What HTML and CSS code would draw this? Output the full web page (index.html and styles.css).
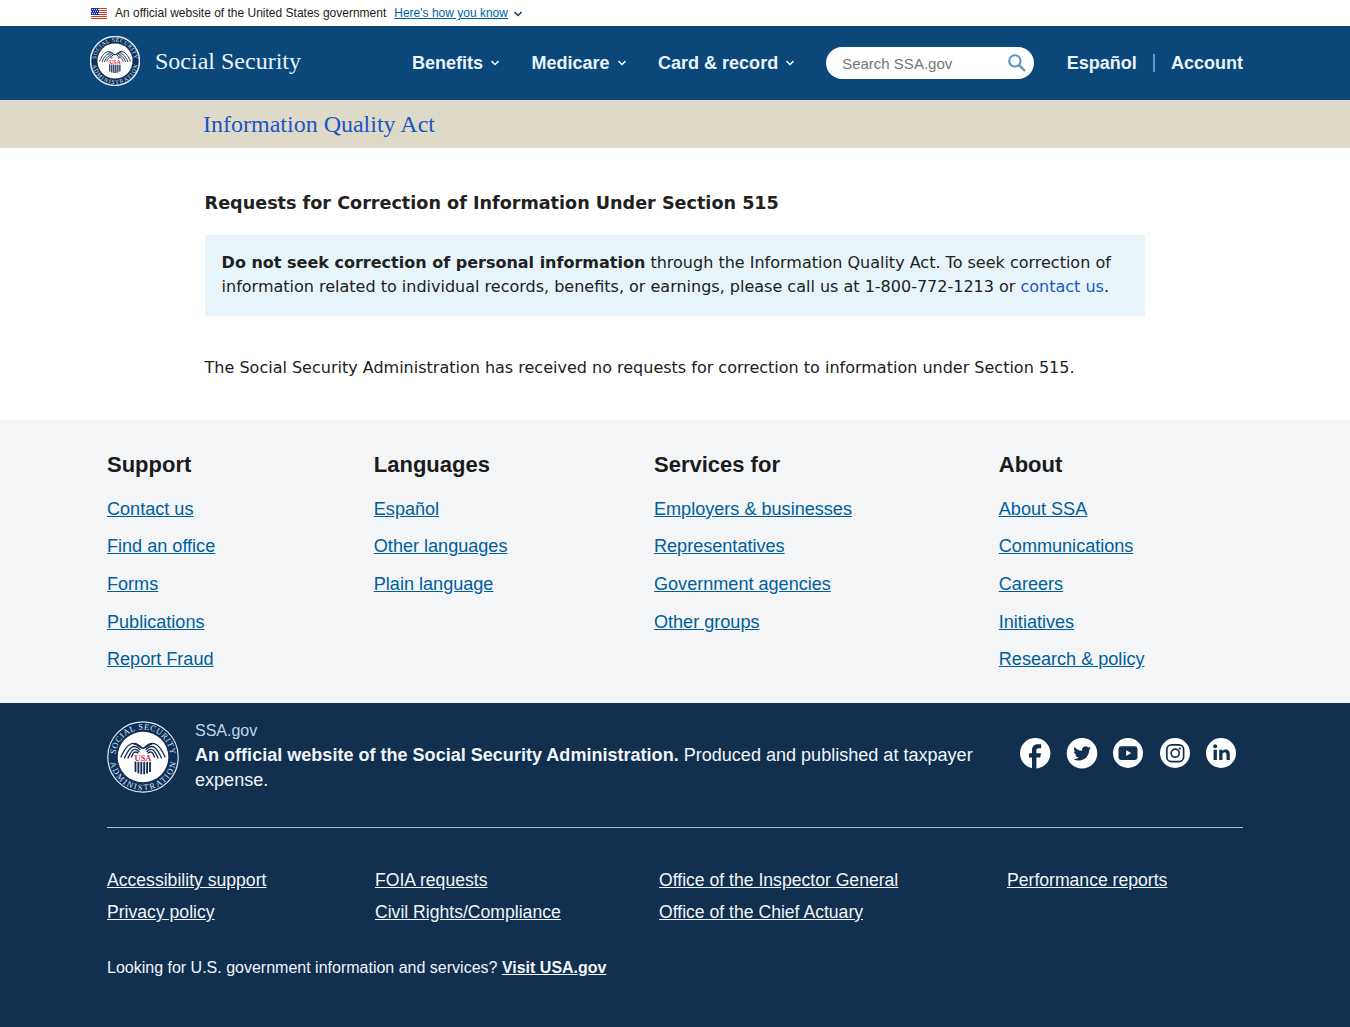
FILE: index.html
```html
<!DOCTYPE html>
<html lang="en">
<head>
<meta charset="utf-8">
<title>Information Quality Act | SSA</title>
<link rel="stylesheet" href="styles.css">
</head>
<body>
<svg class="defs" width="0" height="0" aria-hidden="true">
  <symbol id="seal" viewBox="0 0 72 72">
    <circle class="seal-disc" cx="36" cy="36" r="35.2"/>
    <circle cx="36" cy="36" r="25.3" fill="#fff"/>
    <path id="arc-top" d="M8.5 36A27.5 27.5 0 0 1 63.5 36" fill="none"/>
    <path id="arc-bottom" d="M2.7 36A33.3 33.3 0 0 0 69.3 36" fill="none"/>
    <text class="seal-ring"><textPath href="#arc-top" startOffset="50%" text-anchor="middle" textLength="81">SOCIAL SECURITY</textPath></text>
    <text class="seal-ring"><textPath href="#arc-bottom" startOffset="50%" text-anchor="middle" textLength="93">ADMINISTRATION</textPath></text>
    <g fill="none" stroke="#112e51" stroke-width="1.35" stroke-linecap="round">
      <path d="M34 26C26 18 19 24 14 36M33 28.5C26 21.5 21.5 28 17.5 37M32 30.5C27 25.5 24 30 21 37M31 32C27.5 29.5 26 32 24.5 36"/>
      <path d="M38 26C46 18 53 24 58 36M39 28.5C46 21.5 50.5 28 54.5 37M40 30.5C45 25.5 48 30 51 37M41 32C44.5 29.5 46 32 47.5 36"/>
      <path d="M27 23C31 22.5 33 28 37 27C41 26 42 23 45 23" stroke-width="1.6"/>
    </g>
    <path d="M28.5 40.5v10.5M31.4 40.5v12M34.3 40.5v12.7M37.2 40.5v12.7M40.1 40.5v12M43 40.5v10.5" stroke="#112e51" stroke-width="1.8"/>
    <text x="36" y="40.2" text-anchor="middle" class="seal-usa">USA</text>
  </symbol>
  <symbol id="chevron" viewBox="0 0 10 8"><path d="M1.5 2.2 5 5.5 8.5 2.2" fill="none" stroke="currentColor" stroke-width="1.6"/></symbol>
</svg>

<div class="gov-banner">
  <svg class="flag" viewBox="0 0 16 11"><path fill="#fff" d="M0 0h16v11H0z"/><path stroke="#db3e1f" stroke-width="1" d="M0 .5h16M0 2.5h16M0 4.5h16M0 6.5h16M0 8.5h16M0 10.5h16"/><path fill="#1e33b1" d="M0 0h8v7H0z"/><path stroke="#fff" stroke-width=".8" stroke-dasharray="1 1" d="M1 1.5h7M0 3.5h7M1 5.5h7"/></svg>
  <span>An official website of the United States government</span>
  <a href="#">Here's how you know</a>
  <svg class="chevron"><use href="#chevron"/></svg>
</div>

<header class="site-header">
  <svg class="seal"><use href="#seal"/></svg>
  <a class="brand" href="#">Social Security</a>
  <nav class="main-nav">
    <a href="#">Benefits <svg class="chevron"><use href="#chevron"/></svg></a>
    <a href="#">Medicare <svg class="chevron"><use href="#chevron"/></svg></a>
    <a href="#">Card &amp; record <svg class="chevron"><use href="#chevron"/></svg></a>
  </nav>
  <form class="search">
    <input type="text" placeholder="Search SSA.gov" aria-label="Search SSA.gov">
    <svg viewBox="0 0 18 18"><circle cx="6.9" cy="6.9" r="5.7" fill="none" stroke="#5b93c1" stroke-width="2"/><path d="m11 11 6 6" stroke="#5b93c1" stroke-width="2.4"/></svg>
  </form>
  <div class="account-nav"><a href="#">Español</a><a href="#">Account</a></div>
</header>

<div class="title-bar"><a href="#">Information Quality Act</a></div>

<main class="content">
  <h1>Requests for Correction of Information Under Section 515</h1>
  <p class="notice"><strong>Do not seek correction of personal information</strong> through the Information Quality Act. To seek correction of<br>information related to individual records, benefits, or earnings, please call us at 1-800-772-1213 or <a href="#">contact us</a>.</p>
  <p>The Social Security Administration has received no requests for correction to information under Section 515.</p>
</main>

<footer>
  <div class="footer-links">
    <section><h2>Support</h2><a href="#">Contact us</a><a href="#">Find an office</a><a href="#">Forms</a><a href="#">Publications</a><a href="#">Report Fraud</a></section>
    <section><h2>Languages</h2><a href="#">Español</a><a href="#">Other languages</a><a href="#">Plain language</a></section>
    <section><h2>Services for</h2><a href="#">Employers &amp; businesses</a><a href="#">Representatives</a><a href="#">Government agencies</a><a href="#">Other groups</a></section>
    <section><h2>About</h2><a href="#">About SSA</a><a href="#">Communications</a><a href="#">Careers</a><a href="#">Initiatives</a><a href="#">Research &amp; policy</a></section>
  </div>
  <div class="footer-agency">
    <div class="identity">
      <svg class="seal"><use href="#seal"/></svg>
      <div class="identity-text">
        <p class="domain">SSA.gov</p>
        <p><strong>An official website of the Social Security Administration.</strong> Produced and published at taxpayer expense.</p>
      </div>
      <div class="social">
        <svg viewBox="0 0 30 30"><circle cx="15.2" cy="15.2" r="15.2" fill="#fff"/><path fill="#112f4e" d="M12 31.5V19.5H9v-4.2h3v-2.8c0-4.3 2.2-6.3 5.8-6.3h3.4v4.1h-2.4c-1.7 0-2.4.8-2.4 2.2v2.8h4.6l-.7 4.2h-3.9v12z"/></svg>
        <svg viewBox="0 0 30 30"><circle cx="15" cy="15.3" r="15.3" fill="#fff"/><path fill="#112f4e" transform="translate(6.4 6.7) scale(.73)" d="M23.95 4.57a10 10 0 0 1-2.82.77 4.96 4.96 0 0 0 2.16-2.72c-.95.56-2 .96-3.13 1.18a4.92 4.92 0 0 0-8.38 4.48C7.69 8.1 4.07 6.13 1.64 3.16a4.92 4.92 0 0 0 1.52 6.57 4.9 4.9 0 0 1-2.23-.61v.06a4.92 4.92 0 0 0 3.95 4.83 5 5 0 0 1-2.21.08 4.94 4.94 0 0 0 4.6 3.42A9.87 9.87 0 0 1 0 19.54 14 14 0 0 0 7.55 21.75c9.05 0 14-7.5 14-13.98 0-.21 0-.42-.02-.63a9.94 9.94 0 0 0 2.42-2.57z"/></svg>
        <svg viewBox="0 0 30 30"><circle cx="15" cy="15" r="15" fill="#fff"/><rect x="5.5" y="8.3" width="19" height="13.6" rx="3" fill="#112f4e"/><path fill="#fff" d="m13.2 12.2 5 2.9-5 2.9z"/></svg>
        <svg viewBox="0 0 30 30"><circle cx="15" cy="15" r="15" fill="#fff"/><g fill="none" stroke="#112f4e" stroke-width="1.7"><rect x="6.8" y="6.8" width="16.8" height="16.8" rx="4.6"/><circle cx="15.2" cy="15.2" r="4"/></g><circle cx="19.8" cy="10.6" r="1.1" fill="#112f4e"/></svg>
        <svg viewBox="0 0 30 30"><circle cx="15" cy="15" r="15" fill="#fff"/><circle cx="9.2" cy="8.2" r="2" fill="#112f4e"/><path fill="#112f4e" d="M7.6 11.7h3.3V22H7.6zM13.2 11.7h3.1v1.4c.7-1.2 1.9-1.7 3.2-1.7 3.3 0 4.3 2 4.3 5V22h-3.3v-5c0-1.5-.3-2.7-1.8-2.7-1.6 0-2.2 1.1-2.2 2.7v5h-3.3z"/></svg>
      </div>
    </div>
    <div class="required-links">
      <div><a href="#">Accessibility support</a><a href="#">Privacy policy</a></div>
      <div><a href="#">FOIA requests</a><a href="#">Civil Rights/Compliance</a></div>
      <div><a href="#">Office of the Inspector General</a><a href="#">Office of the Chief Actuary</a></div>
      <div><a href="#">Performance reports</a></div>
    </div>
    <p class="usagov">Looking for U.S. government information and services? <a href="#">Visit USA.gov</a></p>
  </div>
</footer>
</body>
</html>
```
FILE: styles.css
```css
* { box-sizing: border-box; }
body { margin: 0; font-family: "Liberation Sans", Arial, sans-serif; color: #1b1b1b; background: #fff; }
p, h1, h2 { margin: 0; }
.defs { display: block; height: 0; }
.seal { --ring: 1.2; }
.seal-disc { fill: #112f5a; stroke: #d5edfb; stroke-width: var(--ring); }
.seal-ring { font: 8.3px "Liberation Serif", serif; fill: #d5edfb; }
.seal-usa { font: bold 8.4px "Liberation Serif", serif; fill: #e31c3d; stroke: #fff; stroke-width: 1.5; paint-order: stroke; }

.gov-banner { height: 26px; padding-left: 91px; display: flex; align-items: center; font-size: 12px; color: #1b1b1b; }
.flag { width: 16px; height: 11px; margin-right: 8px; }
.gov-banner a { margin-left: 8px; color: #005ea2; }
.chevron { width: 10px; height: 8px; flex: none; }
.gov-banner .chevron { margin-left: 5px; margin-top: 2px; color: #28445c; }

.site-header { height: 74px; padding: 0 107px 0 90px; display: flex; align-items: center; background: #0b4778; color: #e8f5ff; }
.site-header a { color: inherit; text-decoration: none; }
.site-header .seal { --ring: 2.2; width: 50px; height: 50px; margin: -4px 15px 0 0; overflow: visible; }
.site-header .brand { width: 257px; margin-top: -4px; font: 24px "Liberation Serif", serif; }
.main-nav { display: flex; gap: 31.3px; font-size: 18.05px; font-weight: bold; }
.main-nav a { display: flex; align-items: center; gap: 7px; }
.search { width: 208px; height: 32px; margin-left: 31px; padding: 0 8px 0 16px; display: flex; align-items: center; justify-content: space-between; background: #fff; border-radius: 16px; }
.search input { width: 140px; padding: 0; border: 0; outline: 0; background: none; font: 15px "Liberation Sans", sans-serif; }
.search input::placeholder { color: #757575; }
.search svg { width: 18px; height: 18px; }
.account-nav { margin-left: auto; display: flex; font-size: 18.05px; font-weight: bold; line-height: 18px; }
.account-nav a + a { margin-left: 16px; padding-left: 16px; border-left: 2px solid #5b9bd0; }

.title-bar { height: 48px; padding-left: 203px; background: #dfd9c7; font: 24px/48px "Liberation Serif", serif; }
.title-bar a { color: #1a56c4; text-decoration: none; }

.content { height: 272px; padding: 42px 204.6px 0; font: 16px/24px "DejaVu Sans", sans-serif; color: #212121; }
.content h1 { font-size: 17.6px; line-height: 26px; margin-bottom: 19px; }
.notice { height: 81px; padding: 16px 17px; margin-bottom: 40px; background: #e7f4fa; white-space: nowrap; }
.notice a { color: #1a56c4; text-decoration: none; }

.footer-links { height: 283px; padding: 30px 107px 0; display: grid; grid-template-columns: 266.8px 280.2px 344.8px 1fr; background: #f3f5f7; }
.footer-links section { display: flex; flex-direction: column; align-items: flex-start; }
.footer-links h2 { font-size: 22px; line-height: 30px; margin-bottom: 10.8px; }
.footer-links a { font-size: 18.08px; line-height: 37.6px; color: #005e9c; }

.footer-agency { height: 324px; padding: 18px 107px 0; background: #112f4e; color: #f0f6fb; }
.identity { height: 107px; display: flex; align-items: flex-start; border-bottom: 1px solid #a9bed0; }
.identity .seal { width: 72px; height: 72px; margin-right: 16px; }
.identity-text { width: 795px; font-size: 18.06px; line-height: 25px; }
.identity-text .domain { margin-top: -1px; padding-bottom: 2px; font-size: 16px; line-height: 21px; color: #bdd7f0; }
.social { display: flex; gap: 16.5px; padding-top: 17px; margin-left: 30px; }
.social svg { width: 30px; height: 30px; flex: none; overflow: visible; }
.required-links { padding-top: 36px; display: grid; grid-template-columns: 268px 284px 348px 1fr; font-size: 17.6px; line-height: 32px; }
.required-links div { display: flex; flex-direction: column; align-items: flex-start; }
.footer-agency a { color: inherit; }
.usagov { margin-top: 28px; font-size: 16px; line-height: 24px; }
.usagov a { font-weight: bold; }
```
